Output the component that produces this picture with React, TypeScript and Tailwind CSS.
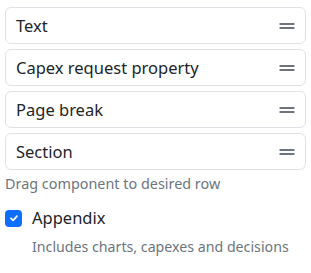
const rows = ["Text", "Capex request property", "Page break", "Section"];

function DragHandle() {
  return (
    <svg width="16" height="8" viewBox="0 0 16 8" className="text-[#6c757d]">
      <rect x="0.5" y="1" width="15" height="2" rx="0.5" fill="currentColor" />
      <rect x="0.5" y="5" width="15" height="2" rx="0.5" fill="currentColor" />
    </svg>
  );
}

export default function App() {
  return (
    <div className="w-[311px] h-[273px] bg-white px-[5px] pt-[7px] font-['Noto_Sans',sans-serif] text-[#212529]">
      <div className="flex flex-col gap-[5px]">
        {rows.map((row) => (
          <div
            key={row}
            className="flex items-center justify-between h-[37px] border border-[#dee2e6] rounded-md pl-[10px] pr-[10px]"
          >
            <span className="text-[16.5px] leading-6">{row}</span>
            <DragHandle />
          </div>
        ))}
      </div>
      <p className="mt-[3px] text-[14.4px] leading-[21px] text-[#6c757d]">
        Drag component to desired row
      </p>
      <label className="mt-[12px] flex items-center gap-[10px]">
        <span className="w-[17px] h-[17px] rounded-[4px] bg-[#0d6efd] flex items-center justify-center">
          <svg width="12" height="12" viewBox="0 0 20 20">
            <path
              d="M5 10.5l3.5 3.5 6.5-7"
              fill="none"
              stroke="#fff"
              strokeWidth="3"
              strokeLinecap="round"
              strokeLinejoin="round"
            />
          </svg>
        </span>
        <span className="text-[16.5px] leading-6">Appendix</span>
      </label>
      <p className="mt-[6px] pl-[27px] text-[14.2px] leading-[21px] text-[#6c757d]">
        Includes charts, capexes and decisions
      </p>
    </div>
  );
}
